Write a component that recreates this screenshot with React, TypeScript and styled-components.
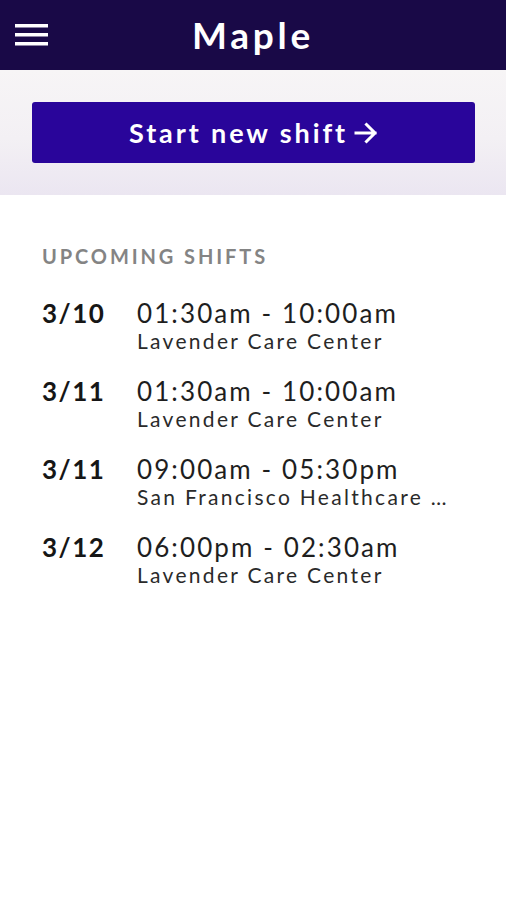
import React from "react";
import styled, { createGlobalStyle } from "styled-components";

const Global = createGlobalStyle`
  html, body { margin: 0; padding: 0; background: #ffffff; }
  body { font-family: "Lato", "Noto Sans", sans-serif; }
  * { box-sizing: border-box; }
`;

const Page = styled.div`
  width: 506px;
  min-height: 900px;
  background: #ffffff;
`;

const Header = styled.header`
  height: 70px;
  background: #190947;
  display: grid;
  grid-template-columns: 64px 1fr 64px;
  align-items: center;
`;

const MenuButton = styled.button`
  background: none;
  border: none;
  padding: 0 0 0 15px;
  height: 100%;
  display: flex;
  align-items: center;
  cursor: pointer;
`;

const Title = styled.h1`
  margin: 0;
  text-align: center;
  color: #ffffff;
  font-family: "Lato", sans-serif;
  font-weight: 700;
  font-size: 37px;
  letter-spacing: 3.8px;
  line-height: 1;
  padding-bottom: 2px;
`;

const Band = styled.section`
  height: 125px;
  background: linear-gradient(180deg, #f7f5f6 0%, #f3f0f4 55%, #ebe6f1 100%);
  padding: 32px 31px 0 32px;
`;

const StartButton = styled.button`
  width: 100%;
  height: 61px;
  background: #29059a;
  border: none;
  border-radius: 3px;
  color: #ffffff;
  font-family: "Lato", sans-serif;
  font-weight: 700;
  font-size: 27px;
  letter-spacing: 2.9px;
  display: flex;
  align-items: center;
  justify-content: center;
  gap: 6px;
  cursor: pointer;
`;

const Content = styled.main`
  padding: 49px 42px 0 42px;
`;

const SectionLabel = styled.h2`
  margin: 0 0 30px 0;
  color: #848484;
  font-family: "Lato", sans-serif;
  font-weight: 700;
  font-size: 20px;
  letter-spacing: 2.9px;
  line-height: 24px;
`;

const List = styled.ul`
  list-style: none;
  margin: 0;
  padding: 0;
  display: flex;
  flex-direction: column;
  gap: 22px;
`;

const Row = styled.li`
  display: grid;
  grid-template-columns: 95px 1fr;
  align-items: start;
`;

const DateText = styled.div`
  font-family: "Lato", sans-serif;
  font-weight: 700;
  font-size: 26px;
  line-height: 30px;
  color: #161616;
  letter-spacing: 1.5px;
`;

const Details = styled.div`
  display: flex;
  flex-direction: column;
  min-width: 0;
`;

const Time = styled.div`
  font-family: "Lato", sans-serif;
  font-weight: 400;
  font-size: 26px;
  line-height: 30px;
  color: #1e1e1e;
  letter-spacing: 2.1px;
`;

const Location = styled.div`
  font-family: "Lato", sans-serif;
  font-weight: 400;
  font-size: 21px;
  line-height: 26px;
  color: #2a2a2a;
  letter-spacing: 2.3px;
  white-space: nowrap;
`;

const shifts = [
  { date: "3/10", time: "01:30am - 10:00am", place: "Lavender Care Center" },
  { date: "3/11", time: "01:30am - 10:00am", place: "Lavender Care Center" },
  { date: "3/11", time: "09:00am - 05:30pm", place: "San Francisco Healthcare …" },
  { date: "3/12", time: "06:00pm - 02:30am", place: "Lavender Care Center" },
];

const Hamburger = () => (
  <svg width="33" height="24" viewBox="0 0 33 24">
    <rect x="0" y="1" width="33" height="3.5" fill="#ffffff" />
    <rect x="0" y="10" width="33" height="3.5" fill="#ffffff" />
    <rect x="0" y="19" width="33" height="3.5" fill="#ffffff" />
  </svg>
);

const Arrow = () => (
  <svg width="24" height="22" viewBox="0 0 24 22">
    <path d="M2 11 H21 M12.5 2.5 L21 11 L12.5 19.5" stroke="#ffffff" strokeWidth="3" fill="none" strokeLinecap="square" />
  </svg>
);

export default function App() {
  return (
    <Page>
      <Global />
      <Header>
        <MenuButton aria-label="menu">
          <Hamburger />
        </MenuButton>
        <Title>Maple</Title>
        <div />
      </Header>
      <Band>
        <StartButton>
          Start new shift <Arrow />
        </StartButton>
      </Band>
      <Content>
        <SectionLabel>UPCOMING SHIFTS</SectionLabel>
        <List>
          {shifts.map((s, i) => (
            <Row key={i}>
              <DateText>{s.date}</DateText>
              <Details>
                <Time>{s.time}</Time>
                <Location>{s.place}</Location>
              </Details>
            </Row>
          ))}
        </List>
      </Content>
    </Page>
  );
}
